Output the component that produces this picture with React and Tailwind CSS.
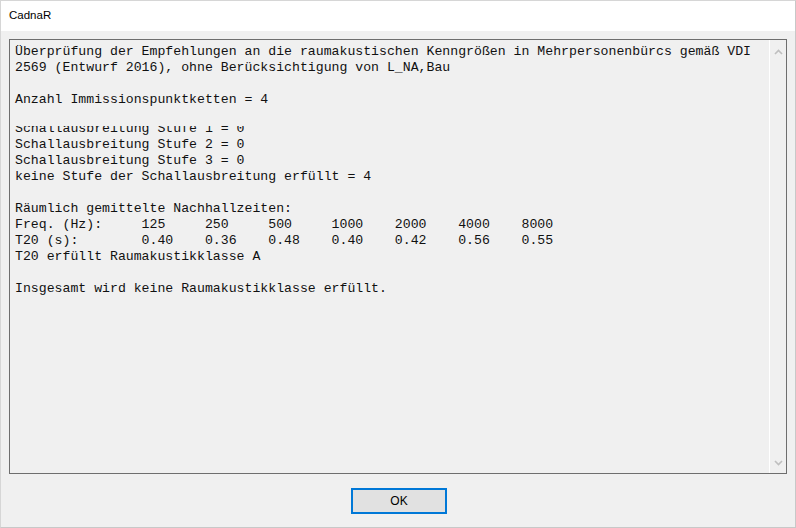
import React from 'react';

const mono = { fontFamily: '"Liberation Mono", "Courier New", monospace' };

// Report lines; value columns sit on 8-char tab stops
const before = [
    'Überprüfung der Empfehlungen an die raumakustischen Kenngrößen in Mehrpersonenbürcs gemäß VDI',
    '2569 (Entwurf 2016), ohne Berücksichtigung von L_NA,Bau',
    '',
    'Anzahl Immissionspunktketten = 4',
    '',
];

const after = [
    'Schallausbreitung Stufe 2 = 0',
    'Schallausbreitung Stufe 3 = 0',
    'keine Stufe der Schallausbreitung erfüllt = 4',
    '',
    'Räumlich gemittelte Nachhallzeiten:',
    'Freq. (Hz):     125     250     500     1000    2000    4000    8000',
    'T20 (s):        0.40    0.36    0.48    0.40    0.42    0.56    0.55',
    'T20 erfüllt Raumakustikklasse A',
    '',
    'Insgesamt wird keine Raumakustikklasse erfüllt.',
];

const Line = ({ children }) => (
    <div className="h-[16px] leading-[16px] whitespace-pre">{children || ' '}</div>
);

const Chevron = ({ down }) => (
    <svg width="9" height="6" viewBox="0 0 9 6" className="block">
        <polyline
            points={down ? '1,1 4.5,4.5 8,1' : '1,5 4.5,1.5 8,5'}
            fill="none"
            stroke="#bfbfbf"
            strokeWidth="1.6"
        />
    </svg>
);

const App = () => {
    return (
        <div className="w-[796px] h-[528px] bg-[#f0f0f0] border border-[#d6d6d6] border-r-[#c8c8c8] border-b-[#c8c8c8] flex flex-col overflow-hidden">
            {/* Title bar */}
            <div
                className="h-[30px] bg-white flex items-center pl-[8px] text-[11.5px] text-black shrink-0"
                style={{ fontFamily: '"Liberation Sans", Arial, sans-serif' }}
            >
                CadnaR
            </div>

            {/* Client area */}
            <div className="flex-1 flex flex-col pt-[8px] pl-[8px]">
                {/* Read-only text box */}
                <div className="w-[778px] h-[435px] border border-[#6e6e6e] flex">
                    <div className="flex-1 pl-[5px] pt-[4px] text-[13.2px] text-[#111] overflow-hidden" style={mono}>
                        {before.map((l, i) => <Line key={i}>{l}</Line>)}
                        {/* partially redrawn line */}
                        <div className="mt-[2px] h-[11px] overflow-hidden">
                            <div className="-mt-[5px] h-[16px] leading-[16px] whitespace-pre">Schallausbreitung Stufe 1 = 0</div>
                        </div>
                        {after.map((l, i) => <Line key={i}>{l}</Line>)}
                    </div>

                    {/* Vertical scrollbar */}
                    <div className="w-[17px] border-l border-white flex flex-col items-center justify-between pt-[9px] pb-[7px]">
                        <Chevron />
                        <Chevron down />
                    </div>
                </div>

                {/* Buttons */}
                <div className="w-[778px] flex justify-center mt-[14px]">
                    <button
                        className="w-[96px] h-[26px] bg-[#e1e1e1] border-2 border-[#0078d7] text-[12px] text-black ml-[2px]"
                        style={{ fontFamily: '"Liberation Sans", Arial, sans-serif' }}
                    >
                        OK
                    </button>
                </div>
            </div>
        </div>
    );
};

export default App;
